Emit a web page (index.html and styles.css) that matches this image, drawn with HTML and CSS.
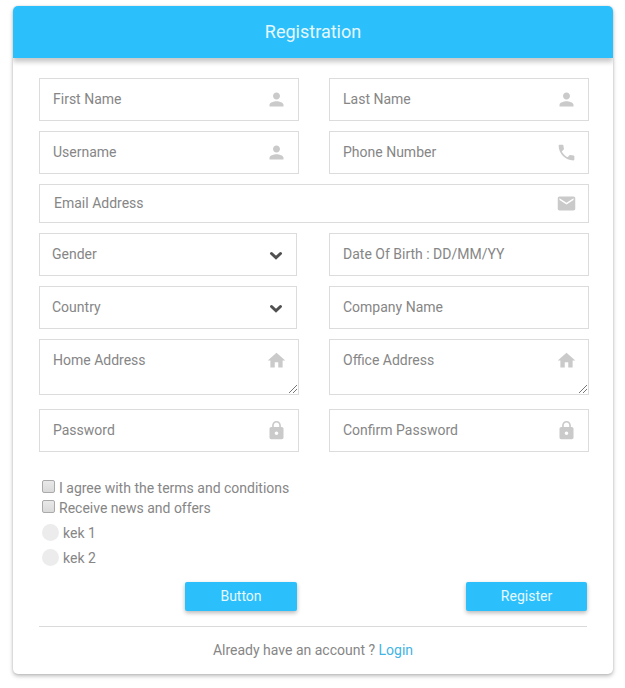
FILE: index.html
```html
<!DOCTYPE html>
<html lang="en">
<head>
<meta charset="utf-8">
<title>Registration</title>
<link rel="stylesheet" href="styles.css">
</head>
<body>
<svg class="defs" aria-hidden="true">
  <symbol id="person" viewBox="0 0 24 24"><path d="M12 12c2.21 0 4-1.79 4-4s-1.79-4-4-4-4 1.790-4 4 1.790 4 4 4zm0 2c-2.670 0-8 1.340-8 4v2h16v-2c0-2.660-5.330-4-8-4z"/></symbol>
  <symbol id="phone" viewBox="0 0 24 24"><path d="M6.620 10.790c1.440 2.830 3.760 5.140 6.590 6.590l2.200-2.200c.27-.27.67-.36 1.020-.24 1.120.37 2.330.57 3.570.57.55 0 1 .45 1 1V20c0 .55-.45 1-1 1-9.390 0-17-7.610-17-17 0-.55.45-1 1-1h3.500c.55 0 1 .45 1 1 0 1.250.2 2.450.57 3.570.11.35.03.74-.25 1.020l-2.200 2.200z"/></symbol>
  <symbol id="mail" viewBox="0 0 24 24"><path d="M20 4H4c-1.100 0-1.990.9-1.990 2L2 18c0 1.100.9 2 2 2h16c1.100 0 2-.9 2-2V6c0-1.100-.9-2-2-2zm0 4l-8 5-8-5V6l8 5 8-5v2z"/></symbol>
  <symbol id="home" viewBox="0 0 24 24"><path d="M10 20v-6h4v6h5v-8h3L12 3 2 12h3v8z"/></symbol>
  <symbol id="lock" viewBox="0 0 24 24"><path d="M18 8h-1V6c0-2.760-2.240-5-5-5S7 3.240 7 6v2H6c-1.100 0-2 .9-2 2v10c0 1.100.9 2 2 2h12c1.100 0 2-.9 2-2V10c0-1.100-.9-2-2-2zm-6 9c-1.100 0-2-.9-2-2s.9-2 2-2 2 .9 2 2-.9 2-2 2zm3.100-9H8.900V6c0-1.710 1.390-3.100 3.100-3.100s3.100 1.390 3.100 3.100v2z"/></symbol>
  <symbol id="chevron" viewBox="0 0 14 10"><path d="M2.500 2.500L7 6.800L11.500 2.500" fill="none" stroke="#505050" stroke-width="3" stroke-linecap="round"/></symbol>
  <symbol id="grip" viewBox="0 0 10 10"><path d="M1 9L9 1M5 9L9 5" fill="none" stroke="#777" stroke-width="1"/></symbol>
</svg>
<main class="card">
  <h1 class="title">Registration</h1>
  <form class="form">
    <div class="grid">
      <div class="field"><span>First Name</span><svg class="icon"><use href="#person"/></svg></div>
      <div class="field"><span>Last Name</span><svg class="icon"><use href="#person"/></svg></div>
      <div class="field"><span>Username</span><svg class="icon"><use href="#person"/></svg></div>
      <div class="field"><span>Phone Number</span><svg class="icon"><use href="#phone"/></svg></div>
      <div class="field wide"><span>Email Address</span><svg class="icon"><use href="#mail"/></svg></div>
      <div class="field select"><span>Gender</span><svg class="chevron"><use href="#chevron"/></svg></div>
      <div class="field"><span>Date Of Birth : DD/MM/YY</span></div>
      <div class="field select"><span>Country</span><svg class="chevron"><use href="#chevron"/></svg></div>
      <div class="field"><span>Company Name</span></div>
      <div class="field area"><span>Home Address</span><svg class="icon"><use href="#home"/></svg><svg class="grip"><use href="#grip"/></svg></div>
      <div class="field area"><span>Office Address</span><svg class="icon"><use href="#home"/></svg><svg class="grip"><use href="#grip"/></svg></div>
      <div class="field"><span>Password</span><svg class="icon"><use href="#lock"/></svg></div>
      <div class="field"><span>Confirm Password</span><svg class="icon"><use href="#lock"/></svg></div>
    </div>
    <div class="options">
      <label class="check"><i class="box"></i><span>I agree with the terms and conditions</span></label>
      <label class="check"><i class="box"></i><span>Receive news and offers</span></label>
      <label class="radio"><i class="dot"></i><span>kek 1</span></label>
      <label class="radio"><i class="dot"></i><span>kek 2</span></label>
    </div>
    <div class="actions">
      <button class="btn" type="button">Button</button>
      <button class="btn register" type="button">Register</button>
    </div>
    <p class="footer">Already have an account ? <a class="login">Login</a></p>
  </form>
</main>
</body>
</html>
```

FILE: styles.css
```css
* { box-sizing: border-box; }
body {
  min-height: 688px;
  margin: 0;
  padding: 6px 12px 0 13px;
  background: #fff;
  color: #868686;
  font: 14px/20px Roboto, sans-serif;
}
.defs { display: none; }
.card {
  width: 600px;
  height: 668px;
  border-radius: 5px;
  background: #fff;
  box-shadow: 0 2px 4px rgba(0, 0, 0, .27), 0 0 2px rgba(0, 0, 0, .12);
}
.title {
  height: 52px;
  margin: 0;
  border-radius: 5px 5px 0 0;
  background: #2bc0fb;
  box-shadow: 0 4px 5px rgba(0, 0, 0, .22);
  clip-path: inset(0 0 -12px 0);
  color: #e6f8ff;
  font-size: 18px;
  font-weight: 400;
  line-height: 52px;
  text-align: center;
}
.form { padding: 20px 24px 0 26px; }
.grid {
  display: grid;
  grid-template-columns: 260px 260px;
  gap: 10px 30px;
}
.field {
  position: relative;
  display: flex;
  align-items: center;
  justify-content: space-between;
  height: 43px;
  padding: 0 11px 0 13px;
  border: 1px solid #dcdcdc;
}
.field span { margin-top: -2px; }
.wide { grid-column: 1 / 3; height: 39px; padding-left: 14px; }
.select { width: 258px; padding: 0 13px 0 12px; }
.area { height: 56px; margin-bottom: 4px; padding-bottom: 13px; }
.icon { width: 21px; height: 21px; fill: #cacaca; }
.chevron { width: 14px; height: 10px; margin-top: 2px; }
.grip { position: absolute; right: 0; bottom: 0; width: 10px; height: 10px; }
.options { margin-top: 26px; padding-left: 3px; }
.check { display: flex; height: 20px; }
.box {
  width: 13px;
  height: 13px;
  margin: 2px 4px 0 0;
  border: 1px solid #aaa;
  border-radius: 2px;
  background: linear-gradient(#e9e9e9, #d9d9d9);
}
.check + .radio { margin-top: 2px; }
.radio { display: flex; align-items: center; height: 25px; }
.dot {
  width: 17px;
  height: 17px;
  margin: 0 4px 0 0;
  border-radius: 50%;
  background: #ececec;
}
.actions {
  display: flex;
  justify-content: space-between;
  width: 548px;
  height: 57px;
  padding: 12px 0 0 146px;
  border-bottom: 1px solid #dadada;
}
.btn {
  width: 112px;
  height: 29px;
  padding: 0;
  border: 0;
  border-radius: 2px;
  background: #2bc0fb;
  box-shadow: 0 2px 4px rgba(0, 0, 0, .28);
  color: #e6f8ff;
  font: 14px/29px Roboto, sans-serif;
}
.register { width: 121px; }
.footer { width: 548px; margin: 13px 0 0; text-align: center; }
.login { color: #43b4e4; }
```
